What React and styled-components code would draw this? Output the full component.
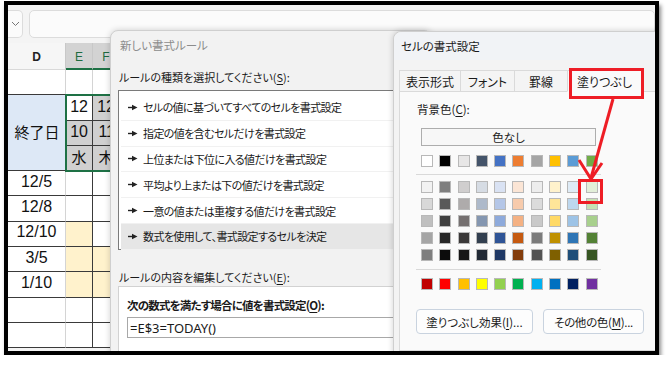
import React from 'react';
import styled, { createGlobalStyle } from 'styled-components';

const GlobalStyle = createGlobalStyle`
  html, body {
    margin: 0;
    padding: 0;
    background: #ffffff;
  }
  body {
    font-family: "Noto Sans CJK JP", "Noto Sans", sans-serif;
    font-feature-settings: "palt";
  }
`;

const Frame = styled.div`
  box-sizing: border-box;
  margin: 1px 0 0 4px;
  width: 655px;
  height: 354px;
  border: 4px solid #000;
  box-shadow: 2px 4px 4px rgba(0, 0, 0, 0.45);
  position: relative;
  overflow: hidden;
  background: #f4f4f4;
`;

const Sheet = styled.div`
  display: flex;
  flex-direction: column;
  height: 100%;
`;

const FormulaBar = styled.div`
  flex: none;
  display: flex;
  gap: 6px;
  padding-top: 5px;
  height: 28px;
  margin-bottom: 5px;
`;

const NameBox = styled.div`
  width: 14px;
  border: 1px solid #dcdcdc;
  border-left: none;
  border-radius: 0 5px 5px 0;
  background: #fbfbfb;
  display: flex;
  align-items: center;
  justify-content: center;
`;

const FormulaInput = styled.div`
  flex: 1;
  border: 1px solid #dcdcdc;
  border-radius: 5px;
  background: #fbfbfb;
`;

const Grid = styled.div`
  flex: none;
  display: grid;
  grid-template-columns: 58px 27px 27px 1fr;
  grid-template-rows: 27px repeat(11, 25.3px);
  background: #fff;
  font-family: "Liberation Sans", "Noto Sans CJK JP", sans-serif;
`;

const Header = styled.div`
  display: flex;
  align-items: center;
  justify-content: center;
  font-size: 12px;
  color: ${p => (p.$selected ? '#1e6b3f' : '#222')};
  font-weight: ${p => (p.$selected ? 400 : 600)};
  background: ${p => (p.$selected ? '#d3d3d3' : '#f6f6f6')};
  border-right: 1px solid #c8c8c8;
  border-bottom: ${p => (p.$selected ? '2px solid #1e7145' : '1px solid #d9d9d9')};
  box-sizing: border-box;
  padding-top: 2px;
`;

const Cell = styled.div`
  box-sizing: border-box;
  display: flex;
  align-items: center;
  justify-content: ${p => (p.$align === 'right' ? 'flex-end' : 'center')};
  padding: ${p => (p.$align === 'right' ? '0 4px 1px 0' : '0 0 3px 0')};
  font-size: ${p => (p.$jp ? '15px' : '16px')};
  font-family: ${p => (p.$jp ? '"Noto Sans CJK JP", sans-serif' : 'inherit')};
  color: #111;
  background: ${p => p.$bg || '#fff'};
  border-right: 1px solid ${p => p.$vline || '#d4d4d4'};
  border-bottom: 1px solid ${p => p.$hline || '#3a3a3a'};
  overflow: hidden;
  white-space: nowrap;
`;

const MergedCell = styled(Cell)`
  grid-column: 1;
  grid-row: 3 / 6;
  font-family: "Noto Sans CJK JP", sans-serif;
  font-size: 15px;
  background: #dde8f6;
  border-right: none;
  padding: 0 0 2px 0;
`;

const SelectionBlock = styled.div`
  grid-column: 2 / 5;
  grid-row: 3 / 6;
  display: grid;
  grid-template-columns: 27px 27px 1fr;
  grid-template-rows: repeat(3, 1fr);
  position: relative;
  z-index: 1;
  outline: 2px solid #1e7145;
  outline-offset: -1px;
`;

const Dialog = styled.div`
  position: absolute;
  left: ${p => p.$left}px;
  top: ${p => p.$top}px;
  width: ${p => p.$width}px;
  height: 340px;
  background: ${p => p.$bg};
  border: 1px solid #cfcfcf;
  border-radius: 8px 8px 0 0;
  box-shadow: 0 0 6px rgba(0, 0, 0, 0.18);
  z-index: ${p => p.$z};
  font-size: 11.5px;
  color: #1a1a1a;
`;

const TitleBar = styled.div`
  height: 28px;
  padding: 0 0 0 ${p => p.$pad}px;
  display: flex;
  align-items: center;
  font-size: 11.5px;
  color: ${p => (p.$inactive ? '#8c8c8c' : '#1a1a1a')};
  background: ${p => p.$bg || 'transparent'};
  border-radius: 8px 8px 0 0;
`;

const DialogBody = styled.div`
  padding: 0 0 0 7px;
  display: flex;
  flex-direction: column;
  font-size: 11px;
`;

const Label = styled.div`
  height: 18px;
  display: flex;
  align-items: center;
  padding-left: 1px;
  margin: ${p => p.$margin};
`;

const Key = styled.span`
  text-decoration: underline;
  text-underline-offset: 2px;
`;

const ListBox = styled.div`
  height: 160px;
  box-sizing: border-box;
  border: 1px solid #7a7a7a;
  background: #fff;
  padding: 4px 0 0 2px;
  display: flex;
  flex-direction: column;
`;

const ListItem = styled.div`
  height: 25.8px;
  flex: none;
  box-sizing: border-box;
  display: flex;
  align-items: center;
  gap: 5px;
  padding-left: 7px;
  background: ${p => (p.$selected ? '#e6e6e6' : '#fff')};
  border-bottom: 1px solid #f1f1f1;
  white-space: nowrap;
  letter-spacing: -0.6px;
`;

const RulePanel = styled.div`
  height: 80px;
  border: 1px solid #d2d2d2;
  background: #fff;
  padding: 9px 0 0 8px;
  display: flex;
  flex-direction: column;
  gap: 3px;
`;

const BoldLabel = styled.div`
  font-weight: 700;
  font-size: 11.5px;
  letter-spacing: -0.8px;
  height: 18px;
  display: flex;
  align-items: center;
`;

const FormulaField = styled.div`
  height: 19px;
  border: 1px solid #a8a8a8;
  border-right: none;
  display: flex;
  align-items: center;
  padding-left: 2px;
  font-size: 13px;
  font-family: "Noto Sans", sans-serif;
`;

const TabRow = styled.div`
  display: flex;
  padding: 10px 0 0 5px;
  height: 22px;
  position: relative;
  z-index: 1;
`;

const Tab = styled.div`
  width: ${p => p.$w}px;
  display: flex;
  align-items: center;
  justify-content: center;
  background: ${p => (p.$active ? '#fafafa' : '#f4f4f4')};
  border: 1px solid #dadada;
  border-bottom: ${p => (p.$active ? '1px solid #fafafa' : '1px solid #dadada')};
  margin-right: -1px;
  font-size: 12px;
`;

const TabPanel = styled.div`
  margin: -1px 0 0 5px;
  height: 250px;
  border: 1px solid #dadada;
  border-right: none;
  background: #fafafa;
  padding: 8px 0 0 16px;
  display: flex;
  flex-direction: column;
`;

const NoColorButton = styled.div`
  margin: 10px 0 0 5px;
  width: 175px;
  height: 18px;
  box-sizing: border-box;
  border: 1px solid #adadad;
  background: #f7f7f7;
  display: flex;
  align-items: center;
  justify-content: center;
  font-size: 11.5px;
`;

const SwatchRow = styled.div`
  display: flex;
  gap: 6.3px;
  margin: ${p => p.$margin};
  padding-left: 5px;
`;

const Swatch = styled.div`
  width: 12px;
  height: 12px;
  box-sizing: border-box;
  border: 1px solid #b8b8b8;
  background: ${p => p.$color};
`;

const Divider = styled.div`
  width: 185px;
  height: 1px;
  background: #d9d9d9;
  margin: ${p => p.$margin};
`;

const ButtonRow = styled.div`
  display: flex;
  gap: 10px;
  margin-top: 19px;
`;

const PushButton = styled.div`
  width: ${p => p.$w}px;
  height: 25px;
  box-sizing: border-box;
  border: 1px solid #c9d3df;
  border-radius: 4px;
  background: #fdfdfd;
  display: flex;
  align-items: center;
  justify-content: center;
  font-size: 11.5px;
  letter-spacing: ${p => p.$tight ? '-0.3px' : '0'};
  white-space: nowrap;
`;

const RedBox = styled.div`
  position: absolute;
  left: ${p => p.$left}px;
  top: ${p => p.$top}px;
  width: ${p => p.$w}px;
  height: ${p => p.$h}px;
  box-sizing: border-box;
  border: 3px solid #ee1d25;
  z-index: 5;
`;

const ArrowSvg = styled.svg`
  position: absolute;
  left: 0;
  top: 0;
  z-index: 6;
  pointer-events: none;
`;

const themeRow = ['#ffffff', '#000000', '#e7e6e6', '#44546a', '#4472c4', '#ed7d31', '#a5a5a5', '#ffc000', '#5b9bd5', '#70ad47'];
const tints = [
  ['#f2f2f2', '#7f7f7f', '#d0cece', '#d6dce4', '#d9e2f3', '#fbe5d5', '#ededed', '#fff2cc', '#deebf6', '#e2efd9'],
  ['#d8d8d8', '#595959', '#aeabab', '#adb9ca', '#b4c6e7', '#f7cbac', '#dbdbdb', '#fee599', '#bdd7ee', '#c5e0b3'],
  ['#bfbfbf', '#3f3f3f', '#757070', '#8496b0', '#8eaadb', '#f4b183', '#c9c9c9', '#ffd965', '#9dc3e6', '#a8d08d'],
  ['#a5a5a5', '#262626', '#3a3838', '#323f4f', '#2f5496', '#c55a11', '#7b7b7b', '#bf9000', '#2e75b5', '#538135'],
  ['#7f7f7f', '#0c0c0c', '#171616', '#222a35', '#1f3864', '#833c0b', '#525252', '#7f6000', '#1e4e79', '#375623'],
];
const standard = ['#c00000', '#ff0000', '#ffc000', '#ffff00', '#92d050', '#00b050', '#00b0f0', '#0070c0', '#002060', '#7030a0'];

const rules = [
  'セルの値に基づいてすべてのセルを書式設定',
  '指定の値を含むセルだけを書式設定',
  '上位または下位に入る値だけを書式設定',
  '平均より上または下の値だけを書式設定',
  '一意の値または重複する値だけを書式設定',
  '数式を使用して、書式設定するセルを決定',
];

const YELLOW = '#fff2cc';
const GRAY = '#d0d0d0';
const DARK = '#3a3a3a';

const dates = [
  { d: '12/5' },
  { d: '12/8' },
  { d: '12/10', e: YELLOW },
  { d: '3/5', e: YELLOW, f: YELLOW },
  { d: '1/10', e: YELLOW, f: YELLOW },
  { d: '' },
  { d: '' },
];

const RuleArrow = () => (
  <svg width="10" height="7" viewBox="0 0 10 7">
    <path d="M0 3.5 H5" stroke="#222" strokeWidth="1.4" />
    <path d="M4 0.8 L9.5 3.5 L4 6.2 Z" fill="#222" />
  </svg>
);

const App = () => (
  <>
    <GlobalStyle />
    <Frame>
      <Sheet>
        <FormulaBar>
          <NameBox>
            <svg width="9" height="6" viewBox="0 0 9 6">
              <path d="M1 1 L4.5 4.5 L8 1" fill="none" stroke="#777" strokeWidth="1" />
            </svg>
          </NameBox>
          <FormulaInput />
        </FormulaBar>
        <Grid>
          <Header>D</Header>
          <Header $selected>E</Header>
          <Header $selected>F</Header>
          <Header />

          <Cell />
          <Cell />
          <Cell />
          <Cell $hline="#e0e0e0" $vline="#fff" />

          <MergedCell>終了日</MergedCell>
          <SelectionBlock>
            <Cell $align="right" $vline={DARK}>12</Cell>
            <Cell $align="right" $bg={GRAY} $vline={DARK}>12</Cell>
            <Cell $bg={GRAY} $vline="#fff" />
            <Cell $align="right" $bg={GRAY} $vline={DARK}>10</Cell>
            <Cell $align="right" $bg={GRAY} $vline={DARK}>11</Cell>
            <Cell $bg={GRAY} $vline="#fff" />
            <Cell $jp $bg={GRAY} $vline={DARK}>水</Cell>
            <Cell $jp $bg={GRAY} $vline={DARK}>木</Cell>
            <Cell $bg={GRAY} $vline="#fff" />
          </SelectionBlock>

          {dates.map((r, i) => (
            <React.Fragment key={i}>
              <Cell>{r.d}</Cell>
              <Cell $bg={r.e} $vline={DARK} />
              <Cell $bg={r.f} $vline={DARK} />
              <Cell $vline="#fff" />
            </React.Fragment>
          ))}
        </Grid>
      </Sheet>

      <Dialog $left={102} $top={25} $width={320} $bg="#f2f2f2" $z={2}>
        <TitleBar $pad={9} $inactive>新しい書式ルール</TitleBar>
        <DialogBody>
          <Label $margin="9px 0 4px 0">
            ルールの種類を選択してください(<Key>S</Key>):
          </Label>
          <ListBox>
            {rules.map((r, i) => (
              <ListItem key={r} $selected={i === 5}>
                <RuleArrow />
                {r}
              </ListItem>
            ))}
          </ListBox>
          <Label $margin="18px 0 0 0">
            ルールの内容を編集してください(<Key>E</Key>):
          </Label>
          <RulePanel>
            <BoldLabel>
              次の数式を満たす場合に値を書式設定(<Key>O</Key>):
            </BoldLabel>
            <FormulaField>=E$3=TODAY()</FormulaField>
          </RulePanel>
        </DialogBody>
      </Dialog>

      <Dialog $left={385} $top={26} $width={280} $bg="#f3f3f3" $z={3}>
        <TitleBar $pad={7} $bg="#f1f3f6">セルの書式設定</TitleBar>
        <TabRow>
          <Tab $w={60}>表示形式</Tab>
          <Tab $w={53}>フォント</Tab>
          <Tab $w={52}>罫線</Tab>
          <Tab $w={73} $active>塗りつぶし</Tab>
        </TabRow>
        <TabPanel>
          <Label $margin="0">
            背景色(<Key>C</Key>):
          </Label>
          <NoColorButton>色なし</NoColorButton>
          <SwatchRow $margin="9px 0 0 0">
            {themeRow.map((c, i) => <Swatch key={i} $color={c} />)}
          </SwatchRow>
          <Divider $margin="7px 0 6px 0" />
          {tints.map((row, r) => (
            <SwatchRow key={r} $margin={r ? '5px 0 0 0' : '0'}>
              {row.map((c, i) => <Swatch key={i} $color={c} />)}
            </SwatchRow>
          ))}
          <Divider $margin="8px 0 8px 0" />
          <SwatchRow $margin="0">
            {standard.map((c, i) => <Swatch key={i} $color={c} />)}
          </SwatchRow>
          <ButtonRow>
            <PushButton $w={117}>
              塗りつぶし効果(<Key>I</Key>)...
            </PushButton>
            <PushButton $w={101} $tight>
              その他の色(<Key>M</Key>)...
            </PushButton>
          </ButtonRow>
        </TabPanel>
        <RedBox $left={175} $top={36} $w={75} $h={31} />
        <RedBox $left={184} $top={147} $w={25} $h={25} />
        <ArrowSvg width="280" height="200" viewBox="0 0 280 200">
          <path d="M219 67 L197 146" stroke="#ee1d25" strokeWidth="3" fill="none" />
          <path d="M185 128 L197 147 L208 131" stroke="#ee1d25" strokeWidth="3" fill="none" />
        </ArrowSvg>
      </Dialog>
    </Frame>
  </>
);

export default App;
